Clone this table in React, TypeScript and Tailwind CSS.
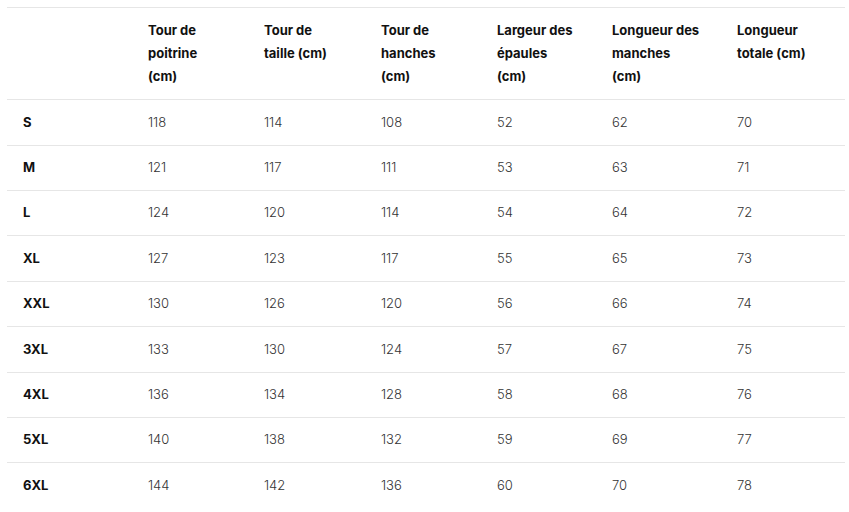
const headers: string[][] = [
  [],
  ["Tour de", "poitrine", "(cm)"],
  ["Tour de", "taille (cm)"],
  ["Tour de", "hanches", "(cm)"],
  ["Largeur des", "épaules", "(cm)"],
  ["Longueur des", "manches", "(cm)"],
  ["Longueur", "totale (cm)"],
];

const rows: (string | number)[][] = [
  ["S", 118, 114, 108, 52, 62, 70],
  ["M", 121, 117, 111, 53, 63, 71],
  ["L", 124, 120, 114, 54, 64, 72],
  ["XL", 127, 123, 117, 55, 65, 73],
  ["XXL", 130, 126, 120, 56, 66, 74],
  ["3XL", 133, 130, 124, 57, 67, 75],
  ["4XL", 136, 134, 128, 58, 68, 76],
  ["5XL", 140, 138, 132, 59, 69, 77],
  ["6XL", 144, 142, 136, 60, 70, 78],
];

const widths = ["w-[125px]", "w-[116px]", "w-[117px]", "w-[116px]", "w-[115px]", "w-[125px]", "w-[124px]"];

export default function App() {
  return (
    <div className="min-h-screen bg-white px-[7px] pt-[7px] font-['Inter','Liberation_Sans',sans-serif] text-[13px] leading-[1.8]">
      <table className="w-[838px] table-fixed border-collapse">
        <colgroup>
          {widths.map((w, i) => (
            <col key={i} className={w} />
          ))}
        </colgroup>
        <thead>
          <tr className="border-t border-[#e6e6e6]">
            {headers.map((h, i) => (
              <th
                key={i}
                className="px-4 py-[10.5px] text-left align-top font-bold text-[#111]"
              >
                {h.map((line, j) => (
                  <div key={j}>{line}</div>
                ))}
              </th>
            ))}
          </tr>
        </thead>
        <tbody>
          {rows.map((r, i) => (
            <tr key={i} className="border-t border-[#e6e6e6]">
              {r.map((c, j) => (
                <td
                  key={j}
                  className={
                    j === 0
                      ? "px-4 py-[10.5px] font-bold text-[#111]"
                      : "px-4 py-[10.5px] font-light text-[#333]"
                  }
                >
                  {c}
                </td>
              ))}
            </tr>
          ))}
        </tbody>
      </table>
    </div>
  );
}
